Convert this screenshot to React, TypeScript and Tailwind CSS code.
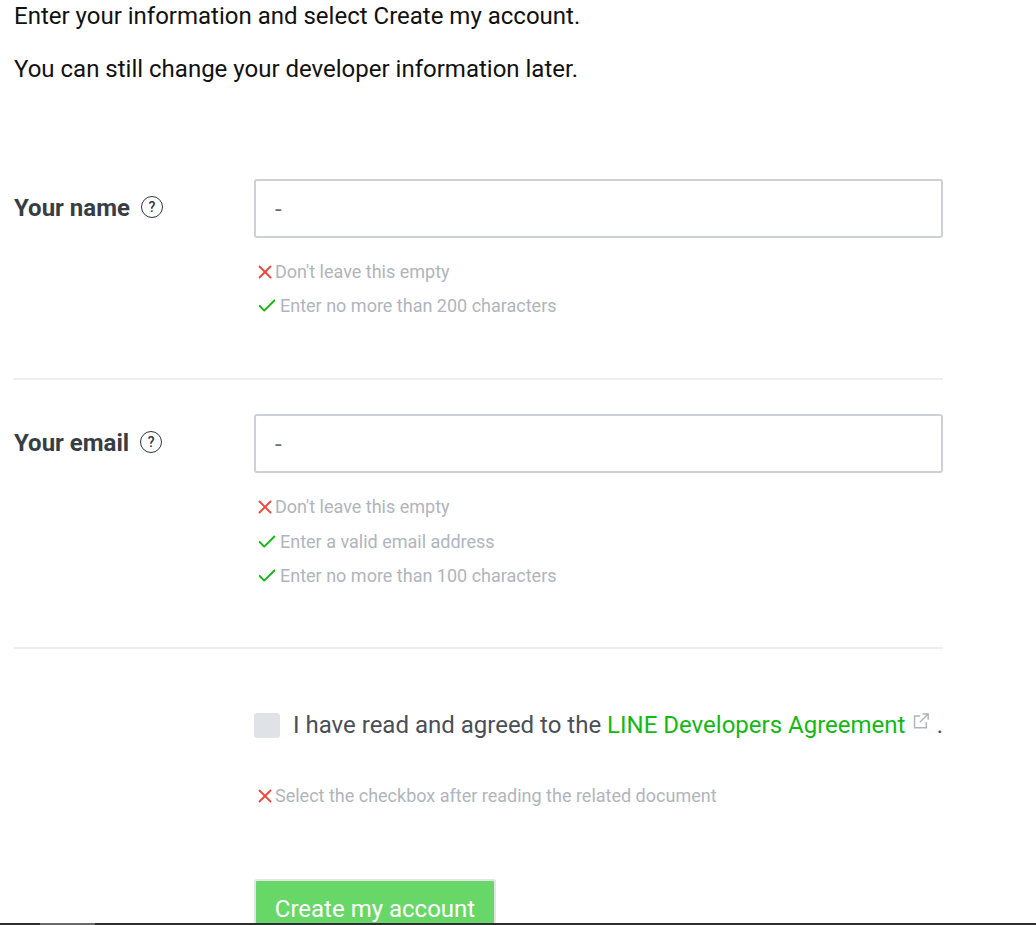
import { Check, X } from 'lucide-react';

const Rule = ({ ok, text }: { ok?: boolean; text: string }) => (
  <li className="flex items-center h-[20px] text-[18px] leading-[20px] text-[#b0b5bd]">
    {ok ? (
      <Check className="w-[22px] h-[22px] ml-[1px] mr-[2px] text-[#12b812]" strokeWidth={2} />
    ) : (
      <X className="w-[22px] h-[22px] mr-[-1px] ml-[-1px] text-[#f0453a]" strokeWidth={2} />
    )}
    <span>{text}</span>
  </li>
);

const Help = () => (
  <span className="ml-[11px] mb-[2px] flex w-[22px] h-[22px] items-center justify-center rounded-full border-[1.5px] border-[#2f353d] text-[14px] font-medium text-[#2f353d]">
    ?
  </span>
);

const Field = ({ label, rules }: { label: string; rules: { ok?: boolean; text: string }[] }) => (
  <section className="flex">
    <div className="w-[240px] flex items-center h-[58px] text-[24px] font-bold text-[#373d45]">
      {label}
      <Help />
    </div>
    <div className="w-[689px]">
      <div className="h-[59px] flex items-center px-[19px] border-2 border-[#cdd0d6] rounded-[3px] text-[24px] text-[#6a6f77]">-</div>
      <ul className="mt-[24px] flex flex-col gap-[14.4px] pl-[1px]">
        {rules.map((r) => (
          <Rule key={r.text} ok={r.ok} text={r.text} />
        ))}
      </ul>
    </div>
  </section>
);

const App = () => {
  return (
    <div className="relative h-[925px] w-[1036px] overflow-hidden bg-white font-['Roboto',sans-serif]">
      <div className="pl-[14px] text-[24px] leading-[32px] text-[#111111]">
        <p>Enter your information and select Create my account.</p>
        <p className="mt-[21px]">You can still change your developer information later.</p>
      </div>

      <form className="ml-[14px] w-[929px] mt-[94px]">
        <Field
          label="Your name"
          rules={[{ text: "Don't leave this empty" }, { ok: true, text: 'Enter no more than 200 characters' }]}
        />
        <hr className="mt-[62px] mb-[34px] border-t-2 border-[#eceef0]" />
        <Field
          label="Your email"
          rules={[
            { text: "Don't leave this empty" },
            { ok: true, text: 'Enter a valid email address' },
            { ok: true, text: 'Enter no more than 100 characters' },
          ]}
        />
        <hr className="mt-[61px] mb-[62px] border-t-2 border-[#eceef0]" />

        <div className="pl-[240px]">
          <label className="flex items-center h-[28px] text-[24px] text-[#4a4f57] whitespace-nowrap">
            <span className="shrink-0 w-[26px] h-[25px] rounded-[3px] bg-[#dfe2e7] mr-[13px]" />
            I have read and agreed to the&nbsp;
            <a className="text-[#14b814]">LINE Developers Agreement</a>
            <svg viewBox="0 0 18 18" className="ml-[8px] mb-[8px] w-[18px] h-[18px] text-[#b0b5bd]" fill="none" stroke="currentColor" strokeWidth="1.6">
              <path d="M8 3.5H1.7v13h13V10M10.5 1.2h6.3v6.3M16.8 1.2 7.5 10.5" />
            </svg>
            <span className="ml-[7px]">.</span>
          </label>
          <ul className="mt-[47px] pl-[1px]">
            <Rule text="Select the checkbox after reading the related document" />
          </ul>
          <button
            type="button"
            className="mt-[73px] block w-[242px] h-[60px] border-2 border-[#e3e5e9] rounded-[3px] bg-[#67d767] text-[24px] text-white"
          >
            Create my account
          </button>
        </div>
      </form>

      {/* scrollbar edge along the bottom of the capture */}
      <div className="absolute bottom-0 inset-x-0 h-[2px] bg-[#2e2e2e]">
        <div className="ml-[40px] w-[55px] h-full bg-[#6b6b6b]" />
      </div>
    </div>
  );
};

export default App;
